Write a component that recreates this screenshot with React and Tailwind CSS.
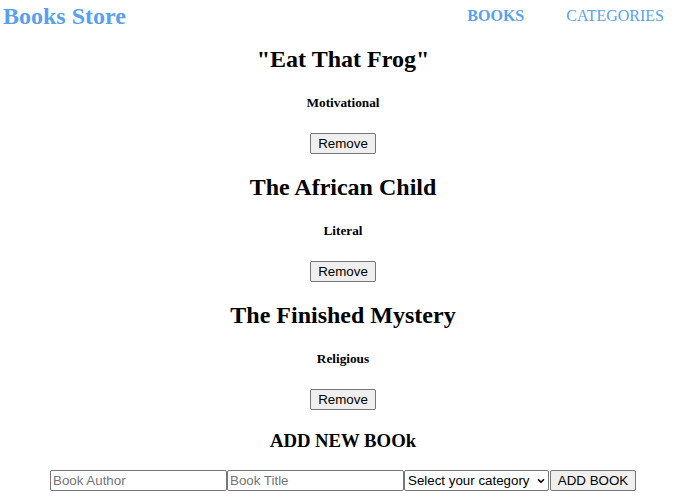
import React from 'react';
import { ChevronDown } from 'lucide-react';

const books = [
    { title: '"Eat That Frog"', category: 'Motivational' },
    { title: 'The African Child', category: 'Literal' },
    { title: 'The Finished Mystery', category: 'Religious' },
];

const btn = "h-[21px] bg-[#efefef] border border-[#767676] rounded-[2px] text-[13.33px] leading-[15px] whitespace-nowrap font-['Liberation_Sans',Arial,sans-serif] text-black";

const Book = ({ title, category, first }) => (
    <div className={`flex flex-col items-center ${first ? '' : 'mt-[19px]'}`}>
        <h2 className="text-[24px] leading-[28px] font-bold">{title}</h2>
        <h5 className="mt-[22px] text-[13.28px] leading-[15px] font-bold">{category}</h5>
        <button className={`mt-[23px] px-[7px] ${btn}`}>Remove</button>
    </div>
);

const App = () => {
    return (
        <div className="min-h-screen bg-white text-black font-['Liberation_Serif','Times_New_Roman',serif]">
            <header className="flex items-center justify-between h-[32px] pl-[3px] pr-[14px]">
                <h1 className="text-[24px] leading-[28px] font-bold text-[#58a1ee]">Books Store</h1>
                <nav className="flex gap-[42px] text-[16px] text-[#58a1ee]">
                    <a href="#" className="font-bold">BOOKS</a>
                    <a href="#">CATEGORIES</a>
                </nav>
            </header>

            <main className="flex flex-col items-center mt-[13px] pl-[8px]">
                {books.map((b, i) => (
                    <Book key={b.title} {...b} first={i === 0} />
                ))}

                <h3 className="mt-[20px] text-[18.72px] leading-[22px] font-bold">ADD NEW BOOk</h3>

                <form className="mt-[18px] flex items-center font-['Liberation_Sans',Arial,sans-serif] text-[13.33px]">
                    <input
                        placeholder="Book Author"
                        className="w-[177px] h-[21px] px-[2px] border border-[#767676] rounded-[2px] placeholder:text-[#757575]"
                    />
                    <input
                        placeholder="Book Title"
                        className="w-[177px] h-[21px] px-[2px] border border-[#767676] rounded-[2px] placeholder:text-[#757575]"
                    />
                    <div className="relative w-[145px] h-[21px]">
                        <select className="appearance-none w-full h-full pl-[3px] border border-[#767676] rounded-[2px] text-black bg-white">
                            <option>Select your category</option>
                            <option>Motivational</option>
                            <option>Literal</option>
                            <option>Religious</option>
                        </select>
                        <ChevronDown className="absolute right-[3px] top-[6px] w-[10px] h-[10px] pointer-events-none" strokeWidth={4} />
                    </div>
                    <button type="button" className={`ml-[1px] w-[86px] px-[4px] ${btn}`}>ADD BOOK</button>
                </form>
            </main>
        </div>
    );
};

export default App;
